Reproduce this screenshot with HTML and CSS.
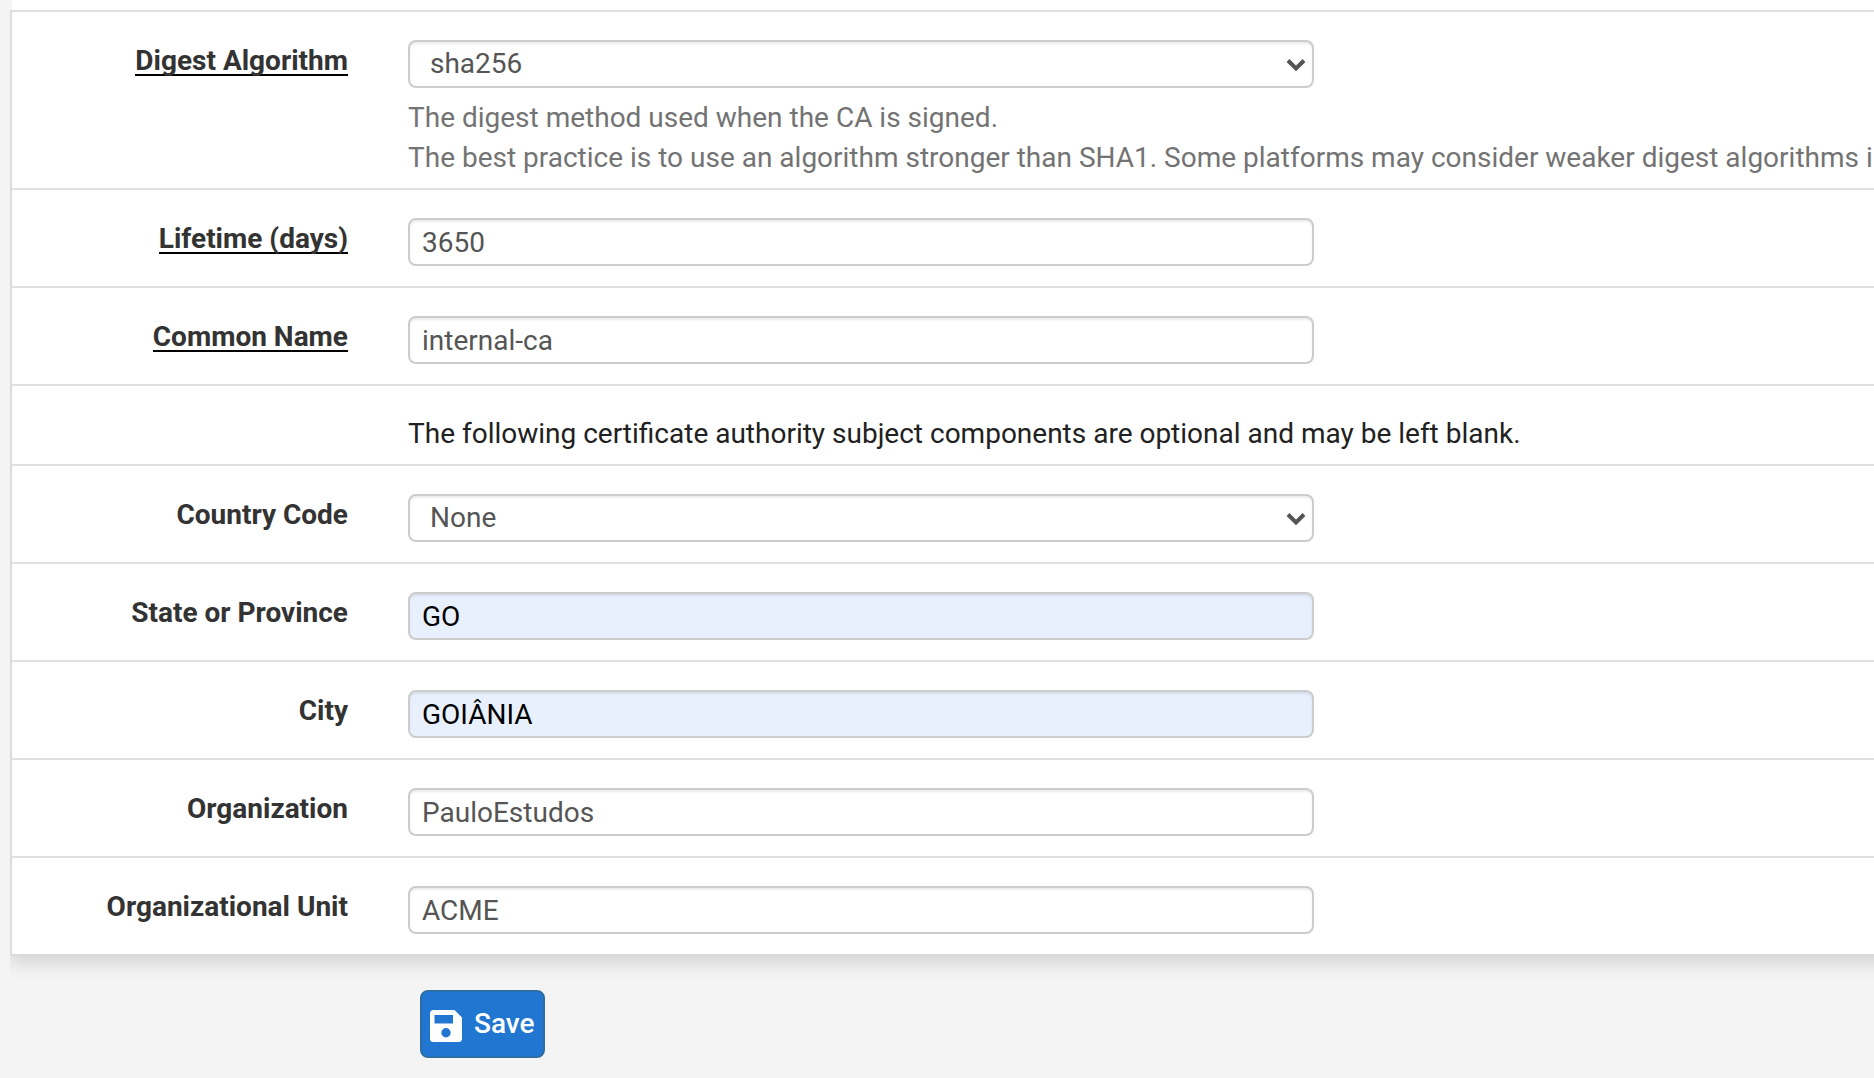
FILE: index.html
```html
<!DOCTYPE html>
<html lang="en">
<head>
<meta charset="utf-8">
<title>Certificate Authority</title>
<link rel="stylesheet" href="styles.css">
</head>
<body>
<form class="ca-form">
  <div class="panel">
    <div class="row">
      <label class="label required" for="digest"><span>Digest Algorithm</span></label>
      <div class="control">
        <div class="select">
          <select class="field" id="digest"><option>sha256</option></select>
          <svg class="chevron" viewBox="0 0 20 14" aria-hidden="true"><path d="M2 2.500 L10 10.500 L18 2.500"/></svg>
        </div>
        <p class="help">The digest method used when the CA is signed.<br>The best practice is to use an algorithm stronger than SHA1. Some platforms may consider weaker digest algorithms invalid</p>
      </div>
    </div>
    <div class="row">
      <label class="label required" for="lifetime"><span>Lifetime (days)</span></label>
      <div class="control"><input class="field" id="lifetime" type="text" value="3650"></div>
    </div>
    <div class="row">
      <label class="label required" for="cn"><span>Common Name</span></label>
      <div class="control"><input class="field" id="cn" type="text" value="internal-ca"></div>
    </div>
    <div class="row">
      <div class="control">The following certificate authority subject components are optional and may be left blank.</div>
    </div>
    <div class="row">
      <label class="label" for="country"><span>Country Code</span></label>
      <div class="control">
        <div class="select">
          <select class="field" id="country"><option>None</option></select>
          <svg class="chevron" viewBox="0 0 20 14" aria-hidden="true"><path d="M2 2.500 L10 10.500 L18 2.500"/></svg>
        </div>
      </div>
    </div>
    <div class="row">
      <label class="label" for="state"><span>State or Province</span></label>
      <div class="control"><input class="field filled" id="state" type="text" value="GO"></div>
    </div>
    <div class="row">
      <label class="label" for="city"><span>City</span></label>
      <div class="control"><input class="field filled" id="city" type="text" value="GOIÂNIA"></div>
    </div>
    <div class="row">
      <label class="label" for="org"><span>Organization</span></label>
      <div class="control"><input class="field" id="org" type="text" value="PauloEstudos"></div>
    </div>
    <div class="row">
      <label class="label" for="unit"><span>Organizational Unit</span></label>
      <div class="control"><input class="field" id="unit" type="text" value="ACME"></div>
    </div>
  </div>
  <div class="actions">
    <button class="save" type="button">
      <svg class="save-icon" viewBox="0 0 32 32" aria-hidden="true"><path fill-rule="evenodd" d="M3.500 0H24.500L32 7.500V28.500A3.500 3.500 0 0 1 28.500 32H3.500A3.500 3.500 0 0 1 0 28.500V3.500A3.500 3.500 0 0 1 3.500 0ZM4.500 5V13.500H23V5ZM16 18A4.700 4.700 0 1 0 16 27.400A4.700 4.700 0 1 0 16 18Z"/></svg>
      <span>Save</span>
    </button>
  </div>
</form>
</body>
</html>
```
FILE: styles.css
```css
* {
  box-sizing: border-box;
}

body {
  margin: 0;
  background: #f4f4f4;
  color: #212121;
  font: 28px/40px Roboto, "Liberation Sans", sans-serif;
}

.ca-form {
  padding: 10px 0 20px 10px;
  background: linear-gradient(#fff, #fff) 12px 0 / 100% 10px no-repeat;
  overflow: hidden;
}

/* The panel runs past the right edge so its shadow does not fade there. */
.panel {
  margin-right: -32px;
  border-left: 2px solid #dcdcdc;
  border-bottom: 2px solid #dadada;
  background: #fff;
  box-shadow: 0 8px 16px rgba(0, 0, 0, 0.12);
  clip-path: inset(0 0 -32px 0);
}

.row {
  display: grid;
  grid-template-columns: 336px minmax(0, 1fr);
  column-gap: 60px;
  padding: 28px 32px 10px 0;
  border-top: 2px solid #e0e0e0;
}

.label {
  color: #333;
  font-weight: 700;
  line-height: 42px;
  text-align: right;
}

.required span {
  display: inline-block;
  line-height: 26px;
  border-bottom: 2px solid #000;
}

.control {
  grid-column: 2;
  white-space: nowrap;
}

.field {
  display: block;
  width: 100%;
  height: 48px;
  margin: 0 0 10px;
  padding: 0 12px;
  border: 2px solid #ccc;
  border-radius: 8px;
  background: #fff;
  box-shadow: inset 0 2px 2px rgba(0, 0, 0, 0.075);
  color: #555;
  font: inherit;
  appearance: none;
}

.control > .field,
.select {
  width: 61.8%;
}

.select {
  position: relative;
}

select.field {
  padding: 0 20px;
}

.filled {
  background: #e8f0fe;
  color: #000;
}

.chevron {
  position: absolute;
  top: 18px;
  right: 8px;
  width: 20px;
  height: 14px;
  fill: none;
  stroke: #555;
  stroke-width: 4;
  pointer-events: none;
}

.help {
  margin: 0;
  color: #737373;
}

.actions {
  padding: 34px 0 0 410px;
}

.save {
  display: flex;
  align-items: center;
  gap: 12px;
  height: 68px;
  padding: 0 8px;
  border: 2px solid #2e6da4;
  border-radius: 8px;
  background: #2176d2;
  color: #fff;
  font: 500 28px/40px Roboto, "Liberation Sans", sans-serif;
}

.save-icon {
  width: 32px;
  height: 32px;
  margin-top: 4px;
  fill: #fff;
}
```
